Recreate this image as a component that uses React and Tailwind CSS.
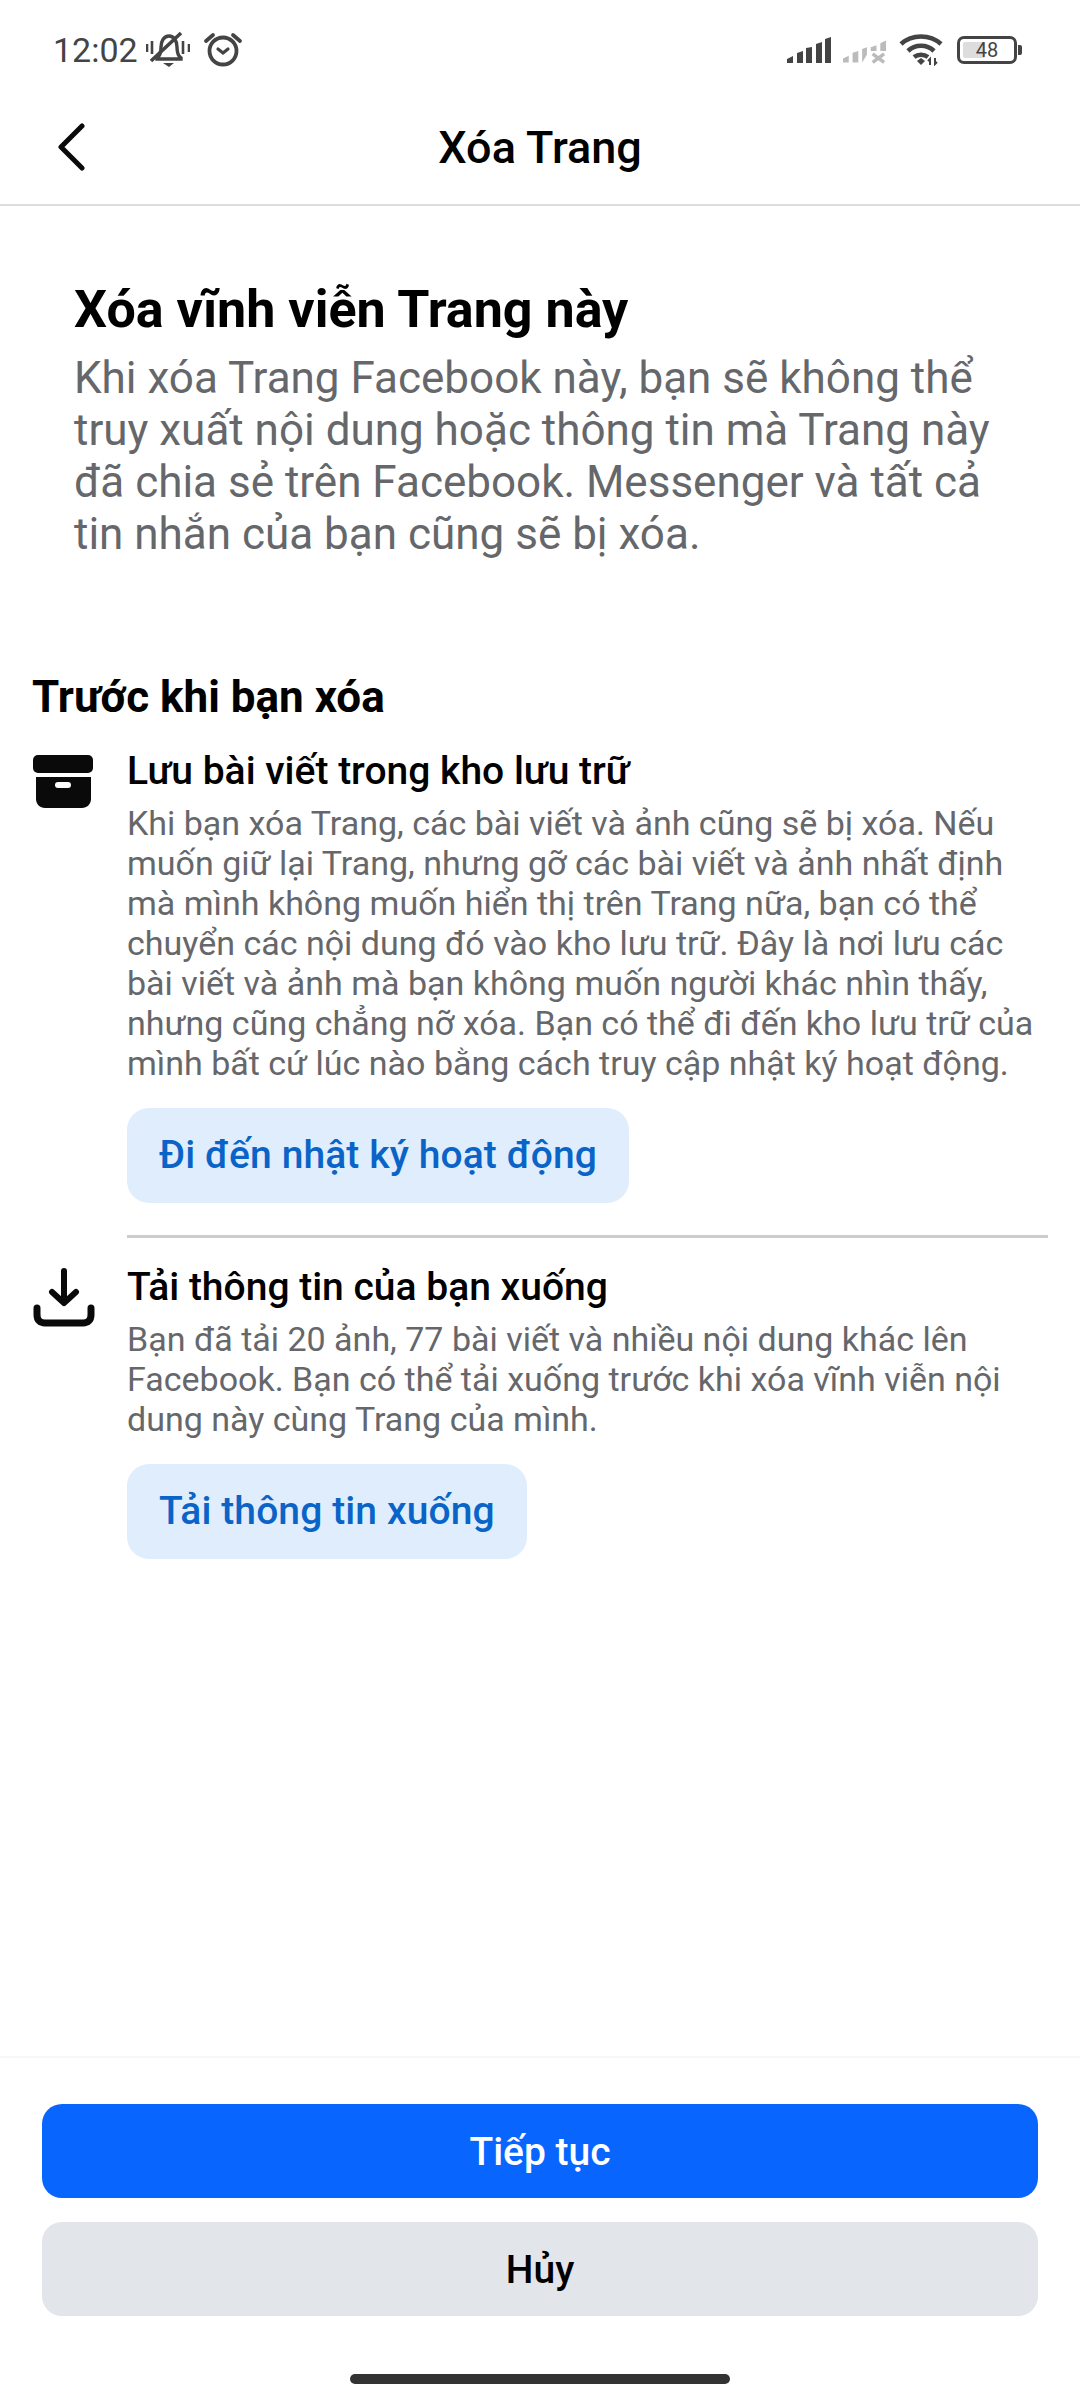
const intro = [
  'Khi xóa Trang Facebook này, bạn sẽ không thể',
  'truy xuất nội dung hoặc thông tin mà Trang này',
  'đã chia sẻ trên Facebook. Messenger và tất cả',
  'tin nhắn của bạn cũng sẽ bị xóa.',
];

const archiveText = [
  'Khi bạn xóa Trang, các bài viết và ảnh cũng sẽ bị xóa. Nếu',
  'muốn giữ lại Trang, nhưng gỡ các bài viết và ảnh nhất định',
  'mà mình không muốn hiển thị trên Trang nữa, bạn có thể',
  'chuyển các nội dung đó vào kho lưu trữ. Đây là nơi lưu các',
  'bài viết và ảnh mà bạn không muốn người khác nhìn thấy,',
  'nhưng cũng chẳng nỡ xóa. Bạn có thể đi đến kho lưu trữ của',
  'mình bất cứ lúc nào bằng cách truy cập nhật ký hoạt động.',
];

const downloadText = [
  'Bạn đã tải 20 ảnh, 77 bài viết và nhiều nội dung khác lên',
  'Facebook. Bạn có thể tải xuống trước khi xóa vĩnh viễn nội',
  'dung này cùng Trang của mình.',
];

function Lines({ items }) {
  return items.map((t) => (
    <div key={t} className="whitespace-nowrap">
      {t}
    </div>
  ));
}

function StatusBar() {
  return (
    <div className="h-[100px] shrink-0 flex items-center justify-between pl-[53px] pr-[58px] text-[#444]">
      <div className="flex items-center">
        <span className="text-[34px] leading-none">12:02</span>
        <svg width="44" height="38" viewBox="0 0 44 38" className="ml-[8px]" fill="none" stroke="#444" strokeWidth="3.4">
          <path d="M11 27c3-2 4-6 4-11 0-6 3-11 8-11s8 5 8 11c0 5 1 9 4 11v1H11z" />
          <path d="M17 32h11l-5 4z" fill="#444" stroke="none" />
          <path d="M1 13v8M6 10v13M37 10v13M43 13v8" strokeWidth="2.6" />
          <path d="M5 30L35 2" strokeWidth="3.6" />
        </svg>
        <svg width="40" height="36" viewBox="0 0 40 36" className="ml-[13px]" fill="none" stroke="#444" strokeWidth="3.8" strokeLinecap="round">
          <circle cx="20" cy="19" r="13.5" />
          <path d="M15 17l5 4 5-4" strokeWidth="3.2" />
          <path d="M3 9l7-6M37 9l-7-6" />
        </svg>
      </div>
      <div className="flex items-center">
        <svg width="44" height="30" viewBox="0 0 44 30">
          <path d="M0 28v-4l6-3v7zM10 28v-10l6-2v12zM19 28V13l6-1v16zM29 28V9l6-2v21zM38 28V4l6-2v26z" fill="#444" />
        </svg>
        <svg width="44" height="30" viewBox="0 0 46 30" className="ml-[12px]">
          <path d="M0 28v-4l6-3v7zM10 28v-10l6-2v12zM20 28V14l5-2v8l-5 8zM29 12l6-2v6h-6zM39 8l6-3v11h-6z" fill="#bbb" />
          <path d="M31 19l12 9M43 19l-12 9" stroke="#bbb" strokeWidth="3.5" />
        </svg>
        <svg width="44" height="32" viewBox="0 0 44 32" className="ml-[12px]" fill="none" stroke="#444" strokeWidth="4.6">
          <path d="M2 10c11-10 29-10 40 0" />
          <path d="M9 17c7-7 19-7 26 0" />
          <path d="M15 23c4-3 10-3 14 0" />
          <path d="M18 27l4-3 4 3-4 4z" fill="#444" stroke="none" />
          <path d="M31 31v-6l-2 2M36 24v6l2-2" strokeWidth="2" />
        </svg>
        <div className="ml-[14px] relative w-[60px] h-[28px] rounded-[7px] border-[3px] border-[#444] flex items-center justify-center text-[20px] leading-none text-[#444]">
          <div className="absolute left-[3px] top-[3px] bottom-[3px] w-[22px] rounded-[2px] bg-[#ddd]" />
          <span className="relative">48</span>
        </div>
        <div className="ml-[1px] w-[4px] h-[10px] rounded-r-[2px] bg-[#444]" />
      </div>
    </div>
  );
}

function Row({ icon, title, text, action }) {
  return (
    <div className="flex">
      <div className="w-[127px] shrink-0 pl-[32px]">{icon}</div>
      <div className="flex-1">
        <div className="text-[39px] leading-[46px] font-medium text-black">{title}</div>
        <div className="text-[34px] leading-[40px] text-[#65676b] mt-[9px]">
          <Lines items={text} />
        </div>
        <button className="mt-[25px] h-[95px] px-[32px] rounded-[22px] bg-[#e0edfc] text-[39px] font-medium tracking-[0.1px] text-[#0a64c8]">
          {action}
        </button>
      </div>
    </div>
  );
}

export default function App() {
  return (
    <div className="w-[1080px] h-[2400px] bg-white flex flex-col font-['Roboto',sans-serif]">
      <StatusBar />
      <header className="relative h-[106px] shrink-0 flex items-center justify-center border-b-2 border-[#ddd] pb-[8px]">
        <svg width="30" height="50" viewBox="0 0 30 50" className="absolute left-[57px] top-[23px]" fill="none" stroke="#0a0a0a" strokeWidth="5" strokeLinecap="round" strokeLinejoin="round">
          <path d="M25 3L4 24l21 21" />
        </svg>
        <h1 className="text-[45px] font-medium text-black">Xóa Trang</h1>
      </header>

      <main className="flex-1 flex flex-col">
        <div className="pl-[74px] pt-[73px]">
          <h2 className="text-[52px] leading-[62px] font-bold text-black">Xóa vĩnh viễn Trang này</h2>
          <div className="text-[44px] leading-[52px] text-[#65676b] mt-[11px]">
            <Lines items={intro} />
          </div>
        </div>

        <h3 className="mt-[111px] pl-[32px] text-[44px] leading-[52px] font-bold text-black">Trước khi bạn xóa</h3>

        <div className="mt-[25px]">
          <Row
            icon={
              <svg width="62" height="54" viewBox="0 0 62 54" className="mt-[7px]" fill="#0a0a0a">
                <rect x="1" y="0" width="60" height="18" rx="5" />
                <path fillRule="evenodd" d="M4 22h55v22c0 5-4 9-9 9H13c-5 0-9-4-9-9zM26 27a2.5 2.5 0 000 6h10a2.5 2.5 0 000-6z" />
              </svg>
            }
            title="Lưu bài viết trong kho lưu trữ"
            text={archiveText}
            action="Đi đến nhật ký hoạt động"
          />
        </div>

        <div className="ml-[127px] mr-[32px] mt-[32px] h-[3px] bg-[#cdcdcd]" />

        <div className="mt-[26px]">
          <Row
            icon={
              <svg width="62" height="60" viewBox="0 0 62 60" className="mt-[4px] ml-[1px]" fill="none" stroke="#0a0a0a" strokeLinecap="round" strokeLinejoin="round">
                <path d="M31 3v31M19 24l12 11 12-11" strokeWidth="6" />
                <path d="M4 40v7c0 5 3 8 8 8h38c5 0 8-3 8-8v-7" strokeWidth="7" />
              </svg>
            }
            title="Tải thông tin của bạn xuống"
            text={downloadText}
            action="Tải thông tin xuống"
          />
        </div>
      </main>

      <footer className="h-[344px] shrink-0 border-t-2 border-[#f7f7f7] flex flex-col">
        <div className="px-[42px] pt-[46px] flex flex-col gap-[24px] text-[39px] font-medium">
          <button className="h-[94px] pt-[3px] rounded-[20px] bg-[#0866ff] text-white">Tiếp tục</button>
          <button className="h-[94px] pt-[3px] rounded-[20px] bg-[#e2e5ea] text-black">Hủy</button>
        </div>
        <div className="mt-[58px] mx-auto w-[380px] h-[10px] rounded-full bg-[#333]" />
      </footer>
    </div>
  );
}
